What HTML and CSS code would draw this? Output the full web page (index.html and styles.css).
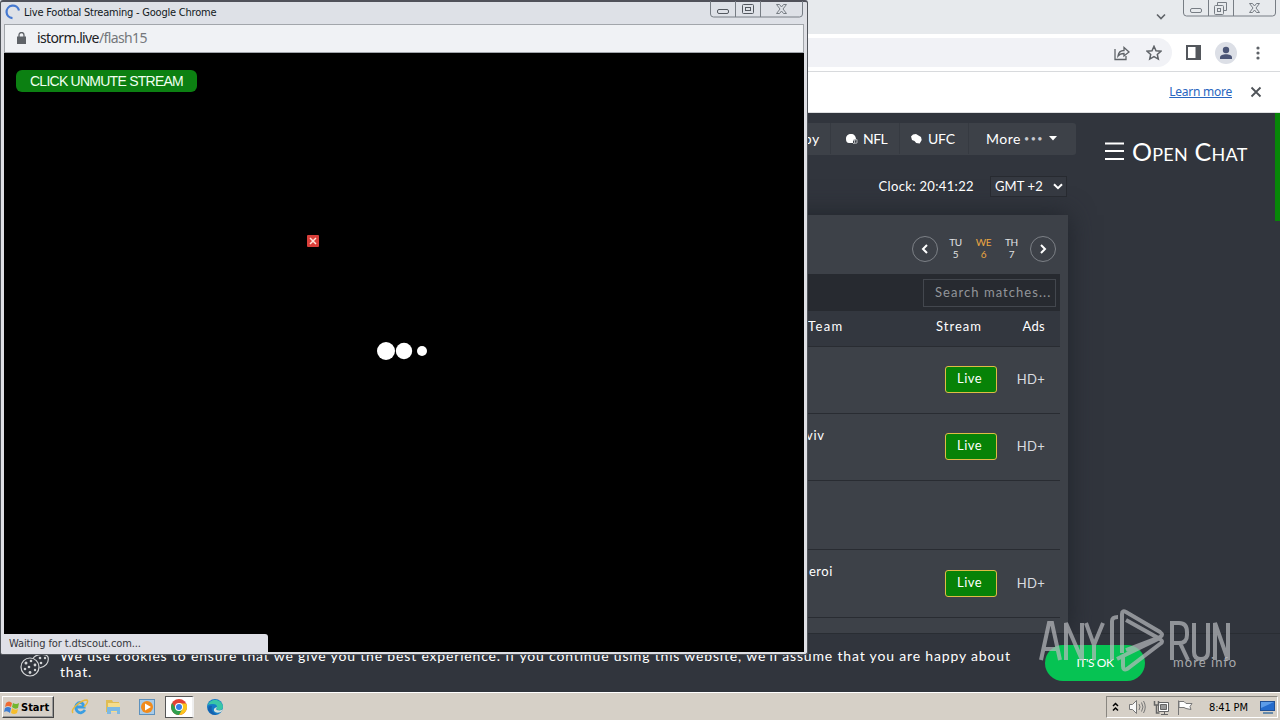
FILE: index.html
```html
<!DOCTYPE html>
<html lang="en">
<head>
<meta charset="utf-8">
<title>Live Footbal Streaming</title>
<link rel="stylesheet" href="styles.css">
</head>
<body>
<div class="desktop">
  <section class="browser">
    <header class="tabstrip">
      <svg class="tab-chevron" width="12" height="8" viewBox="0 0 12 8"><path d="M2 1.500l4 4 4-4" fill="none" stroke="#5f6368" stroke-width="1.600"/></svg>
      <svg class="caption-main" width="95" height="18" viewBox="0 0 95 18" fill="none" stroke="#777d84"><path d="M1.500 0v13q0 3 3 3h86q3 0 3-3V0M26.500 0v16M51.500 0v16"/><rect x="8.500" y="8.500" width="11" height="4" rx="1.500"/><path d="M35.500 5.500v-3h9v8h-3"/><rect x="32.500" y="5.500" width="9" height="9" rx="1"/><rect x="35.500" y="8.500" width="3" height="3"/><path d="M67.500 3.500h3l2 2.500 2-2.500h3l-3.500 4.500 3.500 4.500h-3l-2-2.500-2 2.500h-3l3.500-4.500z"/></svg>
    </header>
    <div class="toolbar">
      <div class="omnibox">
        <svg width="16" height="16" viewBox="0 0 16 16" fill="none" stroke="#5f6368" stroke-width="1.300"><path d="M1 4v10.500h11V11M4 11c.5-4 2.500-5.500 6-5.500V2.500L15 7l-5 4V8.500C7.500 8.500 5.500 9 4 11z"/></svg>
        <svg width="16" height="16" viewBox="0 0 16 16" fill="none" stroke="#5f6368" stroke-width="1.500"><path d="M8 1.300l2 4.400 4.900.5-3.600 3.200 1 4.700L8 11.700l-4.300 2.400 1-4.700-3.600-3.200 4.900-.5z"/></svg>
      </div>
      <svg class="side-icon" width="15" height="15" viewBox="0 0 15 15"><path d="M1 1h13v13H1z" fill="none" stroke="#53575c" stroke-width="2"/><path d="M9.500 1H14v13H9.500z" fill="#53575c"/></svg>
      <svg class="avatar" width="22" height="22" viewBox="0 0 22 22"><circle cx="11" cy="11" r="11" fill="#dcdfe6"/><circle cx="11" cy="8" r="3.200" fill="#4b5576"/><path d="M5 17v-1.500c0-2 3-3.200 6-3.200s6 1.200 6 3.200V17z" fill="#4b5576"/></svg>
      <svg width="4" height="14" viewBox="0 0 4 14" fill="#5f6368"><circle cx="2" cy="2" r="1.600"/><circle cx="2" cy="7" r="1.600"/><circle cx="2" cy="12" r="1.600"/></svg>
    </div>
    <div class="infobar">
      <a class="learn">Learn more</a>
      <svg width="12" height="12" viewBox="0 0 12 12"><path d="M1.500 1.500l9 9M10.500 1.500l-9 9" stroke="#4f5358" stroke-width="1.800"/></svg>
    </div>
    <div class="page">
      <main class="content">
        <nav class="sports">
          <span class="sport rugby">Rugby</span>
          <span class="sport nfl"><svg width="13" height="12" viewBox="0 0 13 12"><path d="M1 6C1 2.500 3 1 6 1s5 2 5 5.500L8 7v3H4C2 10 1 8.500 1 6z" fill="#fff"/><path d="M8 7.500l4-1v3.500l-4 .5M9.500 7v3" fill="none" stroke="#aeb1b5"/></svg>NFL</span>
          <span class="sport ufc"><svg width="13" height="12" viewBox="0 0 13 12"><path d="M1 3.500L3 1.500l3-.5 2.500 1.500L11 4l.7 3-2 3.500-3.500-.5L4.500 8 2 7z" fill="#fff"/></svg>UFC</span>
          <span class="sport more">More <i>•••</i><svg width="8" height="5" viewBox="0 0 8 5"><path d="M0 0h8L4 4.500z" fill="#fff"/></svg></span>
        </nav>
        <div class="clock-row"><span class="clock">Clock: 20:41:22</span><span class="zone">GMT +2<svg width="10" height="7" viewBox="0 0 10 7"><path d="M1 1.200l4 4 4-4" fill="none" stroke="#fff" stroke-width="2"/></svg></span></div>
        <section class="panel">
          <div class="days">
            <span class="round"><svg width="8" height="10" viewBox="0 0 8 10"><path d="M6 1L2 5l4 4" fill="none" stroke="#fff" stroke-width="2"/></svg></span>
            <span class="day">TU<br>5</span><span class="day active">WE<br>6</span><span class="day">TH<br>7</span>
            <span class="round"><svg width="8" height="10" viewBox="0 0 8 10"><path d="M2 1l4 4-4 4" fill="none" stroke="#fff" stroke-width="2"/></svg></span>
          </div>
          <div class="search-row"><span class="search">Search matches...</span></div>
          <div class="row head"><span class="team">Team</span><span class="stream">Stream</span><span class="ads">Ads</span></div>
          <div class="row match"><span class="team"></span><span class="live">Live</span><span class="ads">HD+</span></div>
          <div class="row match"><span class="team">viv</span><span class="live">Live</span><span class="ads">HD+</span></div>
          <div class="row blank"></div>
          <div class="row match last"><span class="team eroi">eroi</span><span class="live">Live</span><span class="ads">HD+</span></div>
        </section>
      </main>
      <aside class="chat"><svg width="19" height="18" viewBox="0 0 19 18"><path d="M0 1.500h19M0 9h19M0 17h19" stroke="#fff" stroke-width="2"/></svg><span>Open Chat</span></aside>
      <div class="scrollbar"></div>
    </div>
    <footer class="cookies">
      <svg class="cookie-icon" width="30" height="24" viewBox="0 0 30 24" fill="none" stroke="#d3d5d7" stroke-width="1.200"><circle cx="10" cy="13" r="9"/><path d="M13 4.500C16-.5 26-1 28 3c1.500 6-3 10-8.500 11"/><g fill="#d3d5d7" stroke="none"><circle cx="6" cy="9" r="1.500"/><circle cx="11" cy="7" r="1.300"/><circle cx="15" cy="11" r="1.400"/><circle cx="9" cy="13" r="1.300"/><circle cx="5" cy="15" r="1.300"/><circle cx="10" cy="18.500" r="1.400"/><circle cx="15" cy="16" r="1.200"/><circle cx="20" cy="4" r="1.300"/><circle cx="25" cy="4" r="1.200"/><circle cx="21" cy="9" r="1.300"/></g></svg>
      <p class="cookie-text">We use cookies to ensure that we give you the best experience. If you continue using this website, we'll assume that you are happy about<br><span>that.</span></p>
      <span class="ok">IT'S OK</span><span class="info">more info</span>
    </footer>
  </section>

  <section class="popup">
    <header class="popup-title">
      <svg width="16" height="16" viewBox="0 0 16 16"><path d="M7.500 14.200A6.300 6.300 0 1 1 14 6.500" fill="none" stroke="#4578d0" stroke-width="2.200"/></svg>
      <span>Live Footbal Streaming - Google Chrome</span>
      <svg class="caption-popup" width="94" height="18" viewBox="0 0 94 18" fill="none" stroke="#777d84"><path d="M.5 0v13q0 3 3 3h86q3 0 3-3V0M25.500 0v16M50.500 0v16"/><g stroke="#53585f"><rect x="7.500" y="8.500" width="11" height="4" rx="1.500"/><rect x="32.500" y="3.500" width="11" height="9" rx="1"/><rect x="35.500" y="6.500" width="5" height="3"/></g><path d="M66.500 3.500h3l2 2.500 2-2.500h3L73 8l3.500 4.500h-3l-2-2.500-2 2.500h-3L70 8z"/></svg>
    </header>
    <div class="address"><svg width="9" height="12" viewBox="0 0 9 12"><path d="M2 5V3a2.500 2.500 0 0 1 5 0v2" fill="none" stroke="#5f6368" stroke-width="1.300"/><path d="M0 4.500h9V12H0z" fill="#5f6368"/></svg><span>istorm.live<b>/flash15</b></span></div>
    <div class="video">
      <span class="unmute">CLICK UNMUTE STREAM</span>
      <svg class="close-ad" width="12" height="12" viewBox="0 0 12 12"><rect width="12" height="12" rx="1" fill="#d93f3a"/><path d="M3 3l6 6M9 3L3 9" stroke="#ffe6dc" stroke-width="1.500"/></svg>
      <svg class="loader" width="52" height="20" viewBox="0 0 52 20" fill="#fff"><circle cx="10" cy="10" r="9"/><circle cx="28" cy="10" r="8.200"/><circle cx="46" cy="10" r="5"/></svg>
      <span class="status">Waiting for t.dtscout.com...</span>
    </div>
  </section>

  <svg class="watermark" width="196" height="66" viewBox="0 0 196 66">
    <g fill="none" stroke="#b9bbbf" stroke-width="4">
      <path d="M3 52L11 15h3l8 37M6 41h14M28 52V15l16 37V15M48 15l8 22v15M65 15l-9 22M74 52V13q0-4 6-4"/>
      <path d="M134 52V15h7q8 0 8 9v3q0 8-8 8h-7M142 35l8 17M156 15v29q0 7 7 7t7-7V15M177 52V15l13 37V15"/>
      <path d="M84 45V6q0-4 4-2l34 20q4 3 0 5L88 42M88 12l34 19q4 3 0 5L89 61q-4 2-4-3V48l37-18M79 51l6-3"/>
    </g>
  </svg>

  <footer class="taskbar">
    <span class="start"><svg width="15" height="15" viewBox="0 0 15 15"><path d="M2 3q3-3 6 0L7 7Q4 5 1 7z" fill="#ef6b32"/><path d="M9 3q3 2 6 0l-1 5q-3 2-6-1z" fill="#72b62d"/><path d="M1 8q3-2 6 0l-1 5q-3-3-6-1z" fill="#3c7cd1"/><path d="M8 8q3 3 6 1l-1 4q-3 2-6 0z" fill="#f6bd2b"/></svg>Start</span>
    <div class="launch">
      <svg width="18" height="18" viewBox="0 0 18 18"><path d="M14 12q-4 5-8 1-3-5 1-8 5-2 6 4H5" fill="none" stroke="#3a9ee2" stroke-width="2.800"/><path d="M2 15C-1 11 10 2 16 2q2 2-3 7" fill="none" stroke="#e9b93a" stroke-width="1.500"/></svg>
      <svg width="18" height="18" viewBox="0 0 18 18"><path d="M2 2h6l1 2h6v10H2z" fill="#e0bd55"/><path d="M4 5h12v9H4z" fill="#f5dd8c"/><path d="M3 9h13v7h-3v-3H7v3H3z" fill="#7db9e3"/></svg>
      <svg width="16" height="16" viewBox="0 0 16 16"><rect x=".5" y=".5" width="15" height="15" fill="#a8cbe8" stroke="#5d91bd"/><circle cx="8" cy="8" r="6" fill="#f18b1c"/><path d="M6 4.500l6 3.500-6 3.500z" fill="#fff"/></svg>
      <span class="active-task"><svg width="16" height="16" viewBox="0 0 16 16"><circle cx="8" cy="8" r="8" fill="#e34234"/><path d="M1.100 4A8 8 0 0 0 8 16l4-6H5z" fill="#2fa04d"/><path d="M8 4.500h7.200A8 8 0 0 1 8 16l3.500-6z" fill="#fbc51c"/><circle cx="8" cy="8" r="4" fill="#fff"/><circle cx="8" cy="8" r="3" fill="#347ee8"/></svg></span>
      <svg width="16" height="16" viewBox="0 0 16 16"><circle cx="8" cy="8" r="8" fill="#147bc7"/><path d="M1 6C3-1 15-1 16 8q-1 4-5 3-3-1-1-3 0-3-4-3-4 0-5 1z" fill="#39c6a7"/><path d="M10 8q-2 3 1 3.300 3 .5 5-1L14 13q-5 2-7-1-1-3 3-4z" fill="#d5e2dc"/><path d="M5 7q-2 6 5 8.500Q4 17 1 11q0-5 4-4z" fill="#1560ad"/></svg>
    </div>
    <div class="tray">
      <svg width="7" height="10" viewBox="0 0 7 10"><path d="M1 4l2.500-2.500L6 4M1 8.500L3.500 6 6 8.500" fill="none" stroke="#000" stroke-width="1.500"/></svg>
      <svg width="17" height="14" viewBox="0 0 17 14" fill="#f8f8f8" stroke="#777"><path d="M.5 4.500h3l4-4v13l-4-4h-3z"/><path d="M10 4q2 3 0 6M12.500 2.500q3 4.500 0 9M14.500 1q3.500 6 0 12" fill="none"/></svg>
      <svg width="17" height="15" viewBox="0 0 17 15" fill="#fff" stroke="#656565"><path d="M5.500 2.500h10v9h-10zM8 14.500h7M11.500 12v2"/><path d="M7.500 4.500h6v5h-6z" fill="#999"/><path d="M1.500 1v4h4V1M3.500 5v8h3" fill="none" stroke-width="1.500"/></svg>
      <svg width="16" height="15" viewBox="0 0 16 15" fill="#fff" stroke="#777"><path d="M1.500 15V.5M2 1.500h5l2 2h6l-2 3 1 3-5-1-2-1H2z"/></svg>
      <span>8:41 PM</span>
      <svg width="15" height="13" viewBox="0 0 15 13"><rect x=".5" y=".5" width="14" height="9" fill="#246bcc" stroke="#205095"/><path d="M1 1h13L1 7z" fill="#5c9ce8"/><path d="M3 12h10" stroke="#668aaa" stroke-width="2"/></svg>
    </div>
  </footer>
</div>
</body>
</html>
```
FILE: styles.css
```css
* { box-sizing: border-box; }
body { margin: 0; }
svg { display: block; flex: none; }
.desktop { position: relative; width: 1280px; height: 720px; overflow: hidden; display: flex; flex-direction: column; white-space: nowrap; font-family: Lato, "Liberation Sans", sans-serif; background: #31353d; }
.browser { height: 692px; flex: none; display: flex; flex-direction: column; }
.tabstrip { height: 34px; flex: none; background: #e7eaed; display: flex; justify-content: flex-end; align-items: flex-start; padding-right: 3px; gap: 15px; }
.tab-chevron { margin-top: 13px; }
.toolbar { height: 38px; flex: none; background: #fff; border-bottom: 1px solid #d8dadd; display: flex; align-items: center; padding-right: 20px; }
.omnibox { flex: 1; height: 29px; border-radius: 0 15px 15px 0; background: #f1f2f6; display: flex; justify-content: flex-end; align-items: center; gap: 16px; padding-right: 10px; }
.side-icon { margin-left: 14px; }
.avatar { margin: 0 19px 0 14px; }
.infobar { height: 41px; flex: none; background: #fff; border-bottom: 1px solid #dedfe1; display: flex; align-items: center; justify-content: flex-end; gap: 18px; padding-right: 18px; }
.learn { font: 12px "Noto Sans", sans-serif; color: #2866c0; text-decoration: underline; letter-spacing: -.25px; margin-bottom: 2px; }
.page { height: 520px; flex: none; display: flex; overflow: hidden; background: #31353d; color: #fff; }
.content { width: 1068px; flex: none; padding-top: 10px; }
.sports { width: 1076px; height: 32px; background: #3d4148; border-radius: 0 3px 3px 0; display: flex; justify-content: flex-end; font-size: 14px; line-height: 30px; padding-bottom: 1px; }
.sport { display: flex; align-items: center; gap: 5px; border-right: 1px solid #363a41; }
.rugby { padding-right: 10px; letter-spacing: .7px; }
.nfl { width: 69px; padding-left: 14px; letter-spacing: -.5px; }
.ufc { width: 69px; padding-left: 10px; letter-spacing: -.2px; }
.more { width: 107px; padding-left: 17px; letter-spacing: .5px; border: 0; }
.more i { font-style: normal; font-size: 9px; letter-spacing: 1.5px; color: #c5c8ce; margin-left: -2px; }
.clock-row { height: 60px; padding: 21px 1px 0 0; display: flex; justify-content: flex-end; align-items: flex-start; gap: 16px; font-size: 13px; line-height: 21px; }
.clock { letter-spacing: .35px; }
.zone { width: 77px; height: 21px; border: 1px solid #272a30; background: #353941; display: flex; align-items: center; justify-content: space-between; padding: 0 3px 0 4px; letter-spacing: .1px; }
.panel { height: 418px; background: #3d4148; padding-right: 8px; box-shadow: 0 0 24px #20242b; }
.days { height: 59px; display: flex; justify-content: flex-end; align-items: flex-start; padding: 21px 4px 0 0; }
.round { width: 26px; height: 26px; border: 1px solid #7c8086; border-radius: 50%; display: flex; justify-content: center; align-items: center; }
.day { width: 27px; font-size: 10px; line-height: 12px; text-align: center; letter-spacing: -.3px; color: #e0e1e3; }
.round + .day { margin-left: 4px; }
.day + .round { margin-left: 5px; }
.day.active { width: 29px; color: #eaa642; }
.search-row { height: 37px; background: #272a30; display: flex; justify-content: flex-end; padding: 5px 4px 0 0; }
.search { width: 133px; height: 28px; border: 1px solid #43474e; font-size: 13px; line-height: 25px; color: #92959a; padding-left: 11px; letter-spacing: 1.05px; }
.row { display: grid; border-bottom: 1px solid #292c32; align-items: center; padding-right: 8px; font-size: 13px; }
.row .team { padding-left: 808px; }
.head { height: 36px; grid-template-columns: 936px 72px 44px; background: #33373f; padding-bottom: 5px; letter-spacing: 1px; }
.ads { text-align: right; padding-right: 7px; letter-spacing: .3px; }
.match .ads { color: #dadce0; padding-bottom: 2px; }
.match { height: 67px; grid-template-columns: 945px 52px 55px; padding-bottom: 1px; }
.match.last { padding-bottom: 0; height: 68px; }
.team { align-self: start; padding-top: 13px; letter-spacing: .7px; }
.match .team { padding-left: 806px; }
.match .eroi { padding-left: 809px; letter-spacing: .5px; }
.head .team { align-self: auto; padding-top: 0; letter-spacing: 1.4px; }
.live { width: 52px; height: 27px; background: #078207; border: 1px solid #dfbc45; border-radius: 3px; line-height: 23px; padding-left: 11px; letter-spacing: .5px; }
.blank { height: 69px; }
.chat { width: 207px; display: flex; align-items: flex-start; padding: 29px 0 0 37px; gap: 8px; }
.chat span { font: small-caps 25px/18px Lato, sans-serif; letter-spacing: .25px; }
.scrollbar { width: 5px; height: 108px; background: #078607; }
.cookies { height: 59px; flex: none; background: #31353d; border-top: 1px solid #292d33; display: flex; color: #fff; padding-left: 20px; }
.cookie-icon { margin-top: 20px; }
.cookie-text { margin: 14px 0 0 10px; width: 985px; font-size: 14px; line-height: 16px; letter-spacing: .83px; }
.ok { width: 100px; height: 36px; margin-top: 11px; border-radius: 18px; background: #06c353; text-align: center; font-size: 12px; line-height: 36px; letter-spacing: -.4px; }
.info { margin: 19px 0 0 28px; font-size: 13px; line-height: 18px; color: #a7a9ac; letter-spacing: 1.05px; }

.popup { position: absolute; left: 0; top: 0; width: 808px; height: 655px; border: 1px solid #50545a; border-top: 2px solid #50515a; border-radius: 3px; background: #dfe0e5; padding: 0 3px 2px; display: flex; flex-direction: column; }
.popup-title { height: 22px; flex: none; display: flex; padding-left: 1px; background: #dee1e7; font: 11px/21px "DejaVu Sans Condensed", sans-serif; color: #111820; }
.popup-title > svg:first-child { margin-top: 2px; }
.popup-title > span { margin-left: 3px; letter-spacing: -.22px; }
.caption-popup { margin: -1px 0 0 auto; }
.address { height: 29px; flex: none; background: #f0f2f5; border: 1px solid #a2a6ab; display: flex; padding: 0 12px 2px; align-items: center; gap: 11px; color: #202124; font: 14px "Noto Sans", sans-serif; letter-spacing: -.62px; }
.address b { color: #74777b; font-weight: 400; }
.video { position: relative; flex: 1; background: #000; display: flow-root; }
.unmute { display: block; width: 181px; height: 22px; margin: 17px 0 0 12px; border-radius: 6px; background: #0c8012; color: #f1fff1; font: 14px/22px "Liberation Sans", sans-serif; text-align: center; letter-spacing: -.75px; }
.close-ad { position: absolute; left: 303px; top: 182px; }
.loader { position: absolute; left: 372px; top: 288px; }
.status { position: absolute; left: -3px; bottom: -2px; width: 267px; height: 20px; border-radius: 0 3px 0 2px; background: #dfe0e7; color: #35373c; font: 11px/19px "DejaVu Sans Condensed", sans-serif; padding-left: 8px; letter-spacing: -.1px; }
.watermark { position: absolute; left: 1038px; top: 608px; opacity: .7; }
.taskbar { height: 28px; flex: none; background: #d6d0c7; box-shadow: inset 0 1px #fff; display: flex; align-items: center; padding: 3px 2px 1px; }
.start { width: 52px; height: 22px; border: 1px solid #fff; border-right-color: #454545; border-bottom-color: #454545; box-shadow: inset -1px -1px #999; display: flex; align-items: center; gap: 2px; padding-left: 1px; font: bold 11px "DejaVu Sans Condensed", sans-serif; }
.launch { display: flex; align-items: center; margin-left: 17px; gap: 16px; }
.launch > svg:nth-child(2) { margin-left: -1px; }
.launch > svg:nth-child(3) { margin-left: 1px; }
.active-task { width: 29px; height: 22px; margin: 0 -3px 0 -6px; background: #fff; border: 1px solid #555; border-right: 2px solid #eee; display: flex; align-items: center; justify-content: center; }
.tray { height: 22px; width: 172px; margin-left: auto; border: 1px solid #898680; border-right-color: #fff; border-bottom-color: #fff; display: flex; align-items: center; padding: 0 0 0 5px; gap: 8px; font: 11px "DejaVu Sans Condensed", sans-serif; }
.tray svg:first-child { margin-right: 2px; }
.tray svg:nth-child(n+3):nth-child(-n+4) { margin-left: -1px; }
.tray span { margin-left: 8px; letter-spacing: -.15px; }
.tray svg:last-child { margin-left: 4px; }
```
